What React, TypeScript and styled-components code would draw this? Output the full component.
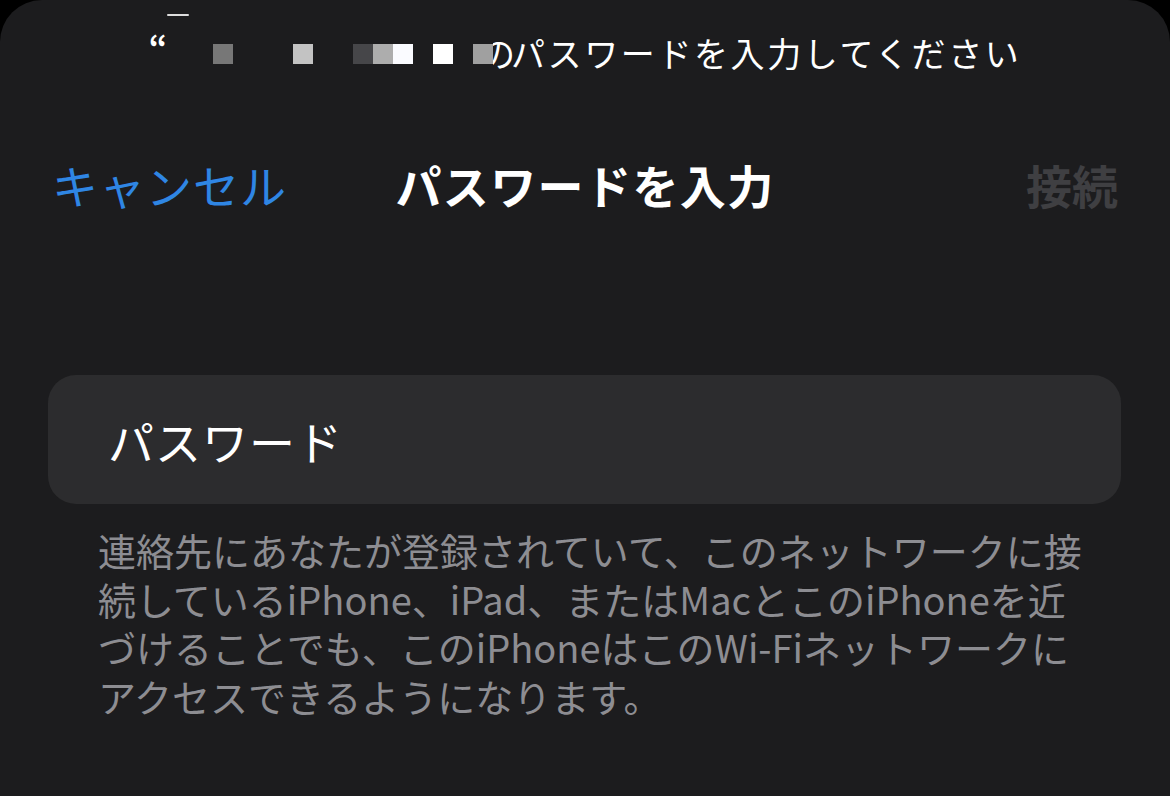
import React from 'react'
import styled, { createGlobalStyle } from 'styled-components'

const COLORS = {
  page: '#000000',
  sheet: '#1c1c1e',
  field: '#2c2c2e',
  blue: '#2f86e4',
  disabled: '#3f3f42',
  footnote: '#8d8d92',
  white: '#ffffff',
}

const GlobalStyle = createGlobalStyle`
  html, body {
    margin: 0;
    padding: 0;
    background: ${COLORS.page};
    overflow: hidden;
  }
  body {
    font-family: "Noto Sans CJK JP", "Noto Sans", sans-serif;
    -webkit-font-smoothing: antialiased;
  }
`

const Sheet = styled.div`
  display: flex;
  flex-direction: column;
  width: 1170px;
  height: 796px;
  background: ${COLORS.sheet};
  border-top-left-radius: 42px;
  border-top-right-radius: 42px;
  overflow: hidden;
`

const Prompt = styled.div`
  display: flex;
  justify-content: center;
  align-items: center;
  margin-top: 30px;
  height: 44px;
  color: ${COLORS.white};
  font-size: 34px;
  white-space: nowrap;
`

const PromptText = styled.span`
  letter-spacing: 2.6px;
`

const Redaction = styled.div`
  position: relative;
  display: flex;
  align-items: center;
  height: 44px;
`

const Quote = styled.span`
  font-size: 32px;
  font-weight: 700;
  line-height: 1;
  margin-top: -14px;
  margin-right: 46px;
`

const Stroke = styled.span`
  position: absolute;
  left: 18px;
  top: -16px;
  width: 22px;
  height: 2px;
  border-radius: 1px;
  background: rgba(255, 255, 255, 0.85);
`

const Block = styled.span<{ $gap: number; $color: string }>`
  display: block;
  width: 20px;
  height: 20px;
  margin-left: ${(p) => p.$gap}px;
  margin-top: 4px;
  background: ${(p) => p.$color};
`

// the redaction cuts through the "の", only its right arc is visible
const ClippedChar = styled.span`
  display: inline-block;
  width: 22px;
  margin-right: -4px;
  overflow: hidden;
  & > span {
    display: inline-block;
    margin-left: -12px;
  }
`

const NavBar = styled.div`
  display: grid;
  grid-template-columns: 1fr auto 1fr;
  align-items: center;
  margin-top: 77px;
  height: 60px;
  padding: 0 52px;
  font-size: 46px;
  white-space: nowrap;
`

const NavButton = styled.span<{ $align: 'left' | 'right'; $color: string; $bold?: boolean }>`
  justify-self: ${(p) => (p.$align === 'left' ? 'start' : 'end')};
  color: ${(p) => p.$color};
  font-weight: ${(p) => (p.$bold ? 700 : 400)};
  letter-spacing: ${(p) => (p.$bold ? 0 : 1)}px;
`

const Title = styled.span`
  color: ${COLORS.white};
  font-weight: 700;
  letter-spacing: 1.4px;
`

const FieldGroup = styled.div`
  display: flex;
  flex-direction: column;
  margin-top: 164px;
  padding: 0 49px 0 48px;
`

const Field = styled.div`
  display: flex;
  align-items: center;
  height: 129px;
  padding-left: 60px;
  border-radius: 28px;
  background: ${COLORS.field};
  color: ${COLORS.white};
  font-size: 46px;
  letter-spacing: 1px;
`

const Footnote = styled.div`
  margin-top: 22px;
  padding-left: 50px;
  color: ${COLORS.footnote};
  font-size: 38px;
  line-height: 48.5px;
  white-space: nowrap;
`

const FootLine = styled.span`
  display: block;
`

const BLOCKS: Array<[number, string]> = [
  [0, '#777777'],
  [60, '#c3c3c3'],
  [40, '#464649'],
  [0, '#adadad'],
  [0, '#fafbff'],
  [20, '#ffffff'],
  [20, '#a0a0a0'],
]

const FOOTNOTE_LINES = [
  '連絡先にあなたが登録されていて、このネットワークに接',
  '続しているiPhone、iPad、またはMacとこのiPhoneを近',
  'づけることでも、このiPhoneはこのWi-Fiネットワークに',
  'アクセスできるようになります。',
]

export default function App() {
  return (
    <>
      <GlobalStyle />
      <Sheet>
        <Prompt>
          <Redaction>
            <Stroke />
            <Quote>“</Quote>
            {BLOCKS.map(([gap, color], i) => (
              <Block key={`block-${i}`} $gap={gap} $color={color} />
            ))}
          </Redaction>
          <ClippedChar>
            <span>の</span>
          </ClippedChar>
          <PromptText>パスワードを入力してください</PromptText>
        </Prompt>
        <NavBar>
          <NavButton $align="left" $color={COLORS.blue}>
            キャンセル
          </NavButton>
          <Title>パスワードを入力</Title>
          <NavButton $align="right" $color={COLORS.disabled} $bold>
            接続
          </NavButton>
        </NavBar>
        <FieldGroup>
          <Field>パスワード</Field>
          <Footnote>
            {FOOTNOTE_LINES.map((line) => (
              <FootLine key={line}>{line}</FootLine>
            ))}
          </Footnote>
        </FieldGroup>
      </Sheet>
    </>
  )
}
